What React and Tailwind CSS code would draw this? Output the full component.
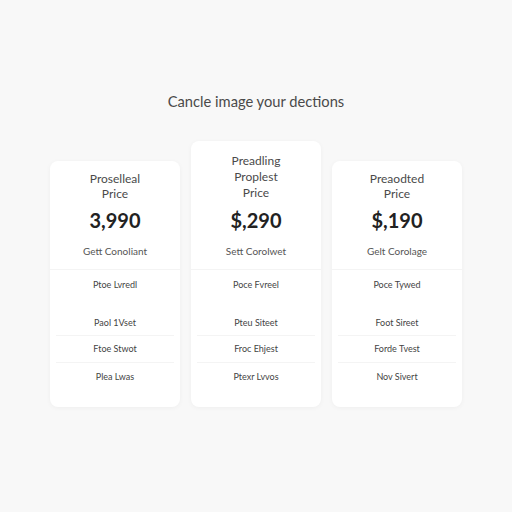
const plans = [
  {
    title: ['Proselleal', 'Price'],
    price: '3,990',
    cta: 'Gett Conoliant',
    features: ['Ptoe Lvredl', 'Paol 1Vset', 'Ftoe Stwot', 'Plea Lwas'],
  },
  {
    title: ['Preadling', 'Proplest', 'Price'],
    price: '$,290',
    cta: 'Sett Corolwet',
    features: ['Poce Fvreel', 'Pteu Siteet', 'Froc Ehjest', 'Ptexr Lvvos'],
    featured: true,
  },
  {
    title: ['Preaodted', 'Price'],
    price: '$,190',
    cta: 'Gelt Corolage',
    features: ['Poce Tywed', 'Foot Sireet', 'Forde Tvest', 'Nov Sivert'],
  },
];

function PlanCard({ plan }) {
  return (
    <div
      className={
        'flex w-[130px] flex-col items-center rounded-lg bg-white shadow-[0_1px_5px_rgba(0,0,0,0.045)] ' +
        (plan.featured ? 'pt-3' : 'pt-[10px]')
      }
    >
      {/* Plan name */}
      <div
        className={
          'text-center text-[12px] text-[#4a4a4a] ' + (plan.featured ? 'leading-[16px]' : 'leading-[15px]')
        }
      >
        {plan.title.map((line) => (
          <div key={line}>{line}</div>
        ))}
      </div>
      <div className="mt-[7px] text-[20px] font-bold leading-[24px] text-[#222]">{plan.price}</div>
      <div className="mt-3 pb-[11px] text-[10px] leading-[14px] text-[#555]">{plan.cta}</div>

      {/* Features */}
      <div className="w-full border-t border-[#f4f4f4] px-1.5 pb-[17px] text-center text-[9px] text-[#444]">
        <div className="h-[30px] pt-[9px] leading-[12px]">{plan.features[0]}</div>
        <div className="mt-[10px] flex h-[26px] items-center justify-center border-b border-[#f4f4f4]">
          {plan.features[1]}
        </div>
        <div className="flex h-[27px] items-center justify-center border-b border-[#f4f4f4]">
          {plan.features[2]}
        </div>
        <div className="flex h-[27px] items-center justify-center">{plan.features[3]}</div>
      </div>
    </div>
  );
}

export default function App() {
  return (
    <div
      className="flex h-[512px] w-[512px] flex-col items-center bg-[#f8f8f8] pt-[92px]"
      style={{ fontFamily: 'Lato, "Open Sans", sans-serif' }}
    >
      <h1 className="text-[14.7px] leading-[18px] text-[#4a4a4a]">Cancle image your dections</h1>
      <div className="mt-[31px] flex items-end gap-[11px]">
        {plans.map((plan) => (
          <PlanCard key={plan.price} plan={plan} />
        ))}
      </div>
    </div>
  );
}
